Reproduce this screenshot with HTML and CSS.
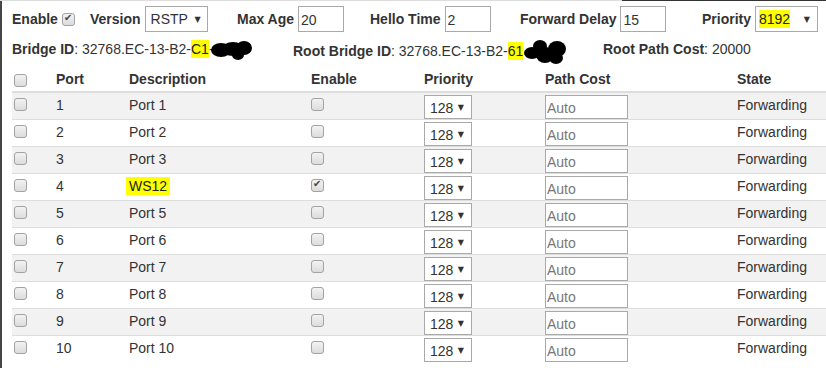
FILE: index.html
```html
<!DOCTYPE html>
<html lang="en">
<head>
    <meta charset="UTF-8">
    <title>Spanning Tree</title>
    <link rel="stylesheet" href="styles.css">
</head>
<body>
<div class="topline"><span class="topline-light"></span><span class="topline-dark"></span></div>
<main class="frame">
    <section class="settings">
        <div class="field">
            <span class="label">Enable</span>
            <input type="checkbox" class="check" checked>
        </div>
        <div class="field">
            <span class="label">Version</span>
            <span class="select select--version"><span>RSTP</span><span class="caret">&#9660;</span></span>
        </div>
        <div class="field">
            <span class="label">Max Age</span>
            <input class="text text--short" value="20">
        </div>
        <div class="field">
            <span class="label">Hello Time</span>
            <input class="text text--short" value="2">
        </div>
        <div class="field">
            <span class="label">Forward Delay</span>
            <input class="text text--short" value="15">
        </div>
        <div class="field">
            <span class="label">Priority</span>
            <span class="select select--prio"><mark class="hl">8192</mark><span class="caret">&#9660;</span></span>
        </div>
    </section>

    <section class="info">
        <div><b>Bridge ID</b>: 32768.EC-13-B2-<mark class="hl">C1</mark>-<svg class="blot" width="42" height="22" viewBox="0 0 42 22"><ellipse cx="10" cy="11" rx="10" ry="7" fill="#000"/><ellipse cx="22" cy="10" rx="11" ry="7" fill="#000"/><ellipse cx="33" cy="9" rx="8" ry="7" fill="#000"/><ellipse cx="27" cy="16" rx="6" ry="5" fill="#000"/></svg></div>
        <div><b>Root Bridge ID</b>: 32768.EC-13-B2-<mark class="hl">61</mark><svg class="blot blot--root" width="44" height="26" viewBox="0 0 44 26"><ellipse cx="9" cy="14" rx="8" ry="6" fill="#000"/><ellipse cx="17" cy="7" rx="7" ry="6" fill="#000"/><ellipse cx="22" cy="16" rx="9" ry="8" fill="#000"/><ellipse cx="34" cy="10" rx="9" ry="8" fill="#000"/><ellipse cx="33" cy="19" rx="7" ry="6" fill="#000"/></svg></div>
        <div><b>Root Path Cost</b>: 20000</div>
    </section>

    <table class="ports">
        <thead>
            <tr>
                <th class="c-check"><input type="checkbox" class="check"></th>
                <th class="c-port">Port</th>
                <th class="c-desc">Description</th>
                <th class="c-en">Enable</th>
                <th class="c-prio">Priority</th>
                <th class="c-cost">Path Cost</th>
                <th class="c-state">State</th>
            </tr>
        </thead>
        <tbody id="rows"></tbody>
    </table>
</main>
<script>
const rows = document.getElementById('rows');
for (let i = 1; i <= 10; i++) {
    const ws = i === 4;
    const desc = ws ? '<mark class="hl hl--desc">WS12</mark>' : 'Port ' + i;
    rows.innerHTML += `
        <tr>
            <td class="c-check"><input type="checkbox" class="check"></td>
            <td>${i}</td>
            <td>${desc}</td>
            <td><input type="checkbox" class="check"${ws ? ' checked' : ''}></td>
            <td><span class="select select--row"><span>128</span><span class="caret">&#9660;</span></span></td>
            <td><input class="text text--cost" placeholder="Auto"></td>
            <td>Forwarding</td>
        </tr>`;
}
</script>
</body>
</html>
```

FILE: styles.css
```css
html, body{
    margin: 0;
    height: 100%;
    overflow: hidden;
}
body{
    font-family: "Liberation Sans", Arial, sans-serif;
    font-size: 14px;
    color: #333;
    background: #fff;
}
.topline{
    display: flex;
    height: 1px;
}
.topline-light{
    width: 622px;
    background: #ddd;
}
.topline-dark{
    flex: 1;
    background: #333;
}
.frame{
    border-left: 2px solid #454545;
    padding-left: 10px;
    height: 100%;
    box-sizing: border-box;
}

/* top settings bar */
.settings{
    display: grid;
    grid-template-columns: 78px 147px 133px 150px 182px auto;
    align-items: center;
    height: 26px;
    padding-top: 5px;
}
.field{
    display: flex;
    align-items: center;
    gap: 4px;
}
.label{
    font-weight: bold;
}

.select{
    display: inline-flex;
    align-items: center;
    justify-content: space-between;
    box-sizing: border-box;
    height: 26px;
    border: 1px solid #a9a9a9;
    background: #fff;
    padding: 0 6px 0 5px;
}
.select--version{
    width: 63px;
}
.select--prio{
    width: 63px;
    padding-left: 3px;
    padding-right: 7px;
}
.select--row{
    width: 48px;
    height: 24px;
    padding: 2px 7px 0 5px;
}
.caret{
    font-size: 8px;
    color: #333;
    font-family: "DejaVu Sans", sans-serif;
}

.text{
    box-sizing: border-box;
    height: 26px;
    border: 1px solid #a9a9a9;
    font: inherit;
    color: #333;
    padding: 1px 2px 0;
    margin: 0;
}
.text--short{
    width: 46px;
}
.text--cost{
    width: 83px;
    height: 24px;
    padding: 2px 1px 0;
}
.text::placeholder{
    color: #777;
}

mark.hl{
    background: #ffff00;
    color: #222;
    padding: 1px 0;
}
mark.hl--desc{
    padding: 1px 3px;
    margin-left: -3px;
}

/* ids row */
.info{
    display: grid;
    grid-template-columns: 281px 310px auto;
    line-height: 20px;
    margin-top: 7px;
    height: 20px;
}
.blot{
    vertical-align: -7px;
    margin-left: -3px;
}
.blot--root{
    vertical-align: -9px;
    margin-left: 0;
}

/* checkbox */
.check{
    appearance: none;
    -webkit-appearance: none;
    width: 13px;
    height: 13px;
    margin: 0;
    border: 1px solid #a3a3a3;
    border-radius: 3px;
    background: linear-gradient(#f2f2f2, #dcdcdc);
    box-sizing: border-box;
    position: relative;
    display: block;
}
.check:checked::after{
    content: "\2714";
    position: absolute;
    left: 1px;
    top: -2px;
    font-size: 10px;
    color: #444;
    font-family: "DejaVu Sans", sans-serif;
}

/* ports table */
.ports{
    width: 814px;
    border-collapse: collapse;
    margin-top: 7px;
    table-layout: fixed;
}
.ports th{
    text-align: left;
    font-weight: bold;
    line-height: 20px;
    padding: 3px 8px 2px;
    border-bottom: 2px solid #ddd;
}
.ports td{
    line-height: 20px;
    padding: 2px 8px 0;
    height: 24px;
    box-sizing: content-box;
    border-top: 1px solid #ddd;
    vertical-align: top;
}
.ports tbody tr:first-child td{
    border-top: none;
}
.ports tbody tr:nth-child(odd){
    background: #f2f2f2;
}
.ports td .check{
    margin-top: 3px;
}
.ports .c-check{
    width: 26px;
    padding-left: 2px;
}
.ports th.c-check .check{
    margin-top: 3px;
}
.c-port{ width: 57px; }
.c-desc{ width: 166px; }
.c-en{ width: 97px; }
.c-prio{ width: 105px; }
.c-cost{ width: 176px; }
.c-state{ width: 81px; }
```
